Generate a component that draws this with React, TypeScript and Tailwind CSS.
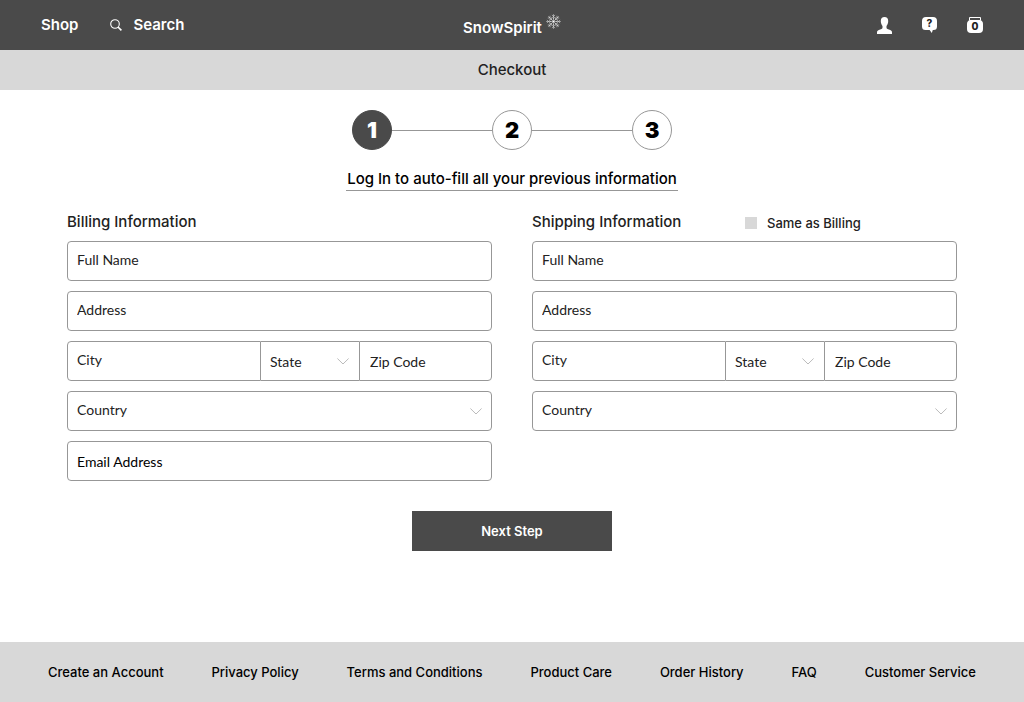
import React from "react";

const footerLinks = [
  "Create an Account",
  "Privacy Policy",
  "Terms and Conditions",
  "Product Care",
  "Order History",
  "FAQ",
  "Customer Service",
];

const textField =
  "h-10 w-full min-w-0 rounded border border-[#979797] bg-white px-[9px] font-['Lato',sans-serif] text-sm text-[#222] placeholder:text-[#222] placeholder:opacity-100 focus:outline-none focus:border-[#4a4a4a]";

function SearchIcon() {
  return (
    <svg width="12" height="12" viewBox="0 0 12 12" fill="none" stroke="#fff" aria-hidden="true">
      <circle cx="5" cy="5" r="4.3" strokeWidth="1.1" />
      <path d="M8 8l3.400 3.400" strokeWidth="1.600" />
    </svg>
  );
}

function Snowflake() {
  return (
    <svg width="15" height="15" viewBox="0 0 15 15" fill="none" stroke="#fff" strokeWidth="0.6" strokeOpacity="0.8" aria-hidden="true">
      <circle cx="7.5" cy="7.5" r="0.8" fill="#fff" stroke="none" />
      {[0, 45, 90, 135, 180, 225, 270, 315].map((angle) => (
        <g key={angle} transform={`rotate(${angle} 7.5 7.5)`}>
          <path d="M7.500 7.500V0.200M5.900 1l1.600 1.500L9.100 1M6.100 3.200l1.400 1.300 1.400-1.300" />
        </g>
      ))}
    </svg>
  );
}

function PersonIcon() {
  return (
    <svg width="15" height="17" viewBox="0 0 15 17" fill="#fff" aria-hidden="true">
      <path d="M7.500 0C9.900 0 11.200 1.600 11.200 4c0 2-.7 3.800-1.700 5v1.800c0 .6.4 1 1 1.200l2.700.9c1.200.4 1.800 1.200 1.800 2.500V17H0v-1.600c0-1.300.6-2.100 1.800-2.500l2.700-.9c.6-.2 1-.6 1-1.200V9c-1-1.200-1.700-3-1.700-5C3.800 1.600 5.100 0 7.500 0z" />
    </svg>
  );
}

function HelpIcon() {
  return (
    <svg width="15" height="16" viewBox="0 0 15 16" aria-hidden="true">
      <path d="M4 0h7a4 4 0 0 1 4 4v5.500a3.500 3.500 0 0 1-3.500 3.500h-.7L9.800 16 7.600 13H3.500A3.500 3.500 0 0 1 0 9.500V4a4 4 0 0 1 4-4z" fill="#fff" />
      <text x="7.500" y="10" textAnchor="middle" className="fill-[#222] font-['Inter',sans-serif] text-[10px] font-extrabold">?</text>
    </svg>
  );
}

function JarIcon() {
  return (
    <svg width="16" height="16" viewBox="0 0 16 16" aria-hidden="true">
      <path d="M2.500 3.500V.5h11v3" fill="none" stroke="#fff" />
      <path d="M3 3h10c2 .6 3 1.800 3 4v5a4 4 0 0 1-4 4H4a4 4 0 0 1-4-4V7c0-2.200 1-3.400 3-4z" fill="#fff" />
      <text x="8" y="13" textAnchor="middle" className="fill-[#222] font-['Inter',sans-serif] text-[10px] font-extrabold">0</text>
    </svg>
  );
}

function Step({ value, active = false }: { value: number; active?: boolean }) {
  return (
    <li
      aria-current={active ? "step" : undefined}
      className={`flex size-10 items-center justify-center rounded-full border pt-px text-[22px] font-black ${
        active ? "border-[#4a4a4a] bg-[#4a4a4a] text-white" : "border-[#979797] bg-white text-black"
      }`}
    >
      {value}
    </li>
  );
}

function SelectField({ label, className = "" }: { label: string; className?: string }) {
  return (
    <div className="relative">
      <select aria-label={label} className={`${textField} appearance-none ${className}`}>
        <option>{label}</option>
      </select>
      <svg
        width="12"
        height="7"
        viewBox="0 0 12 7"
        fill="none"
        stroke="#bbb"
        className="pointer-events-none absolute top-[17px] right-[10px]"
        aria-hidden="true"
      >
        <path d="M.4.500L6 6 11.600.500" />
      </svg>
    </div>
  );
}

function AddressFields({ group }: { group: string }) {
  return (
    <>
      <input type="text" aria-label={`${group} Full Name`} placeholder="Full Name" className={`${textField} pb-[3px]`} />
      <input type="text" aria-label={`${group} Address`} placeholder="Address" className={`${textField} pb-[3px]`} />
      <div className="grid grid-cols-[194fr_98fr_133fr]">
        <input type="text" aria-label={`${group} City`} placeholder="City" className={`${textField} rounded-r-none pb-[3px]`} />
        <SelectField label="State" className="rounded-none border-x-0 pt-px" />
        <input type="text" aria-label={`${group} Zip Code`} placeholder="Zip Code" className={`${textField} rounded-l-none pt-px pl-[10px]`} />
      </div>
      <SelectField label="Country" className="pb-[3px]" />
    </>
  );
}

export default function App() {
  return (
    <div className="flex min-h-screen flex-col bg-white font-['Inter',sans-serif] text-black">
      <header className="grid h-[50px] grid-cols-[1fr_auto_1fr] items-center bg-[#4a4a4a] px-[41px] text-white">
        <nav className="flex items-center gap-8 text-[15px] font-semibold">
          <a href="#shop">Shop</a>
          <a href="#search" className="flex items-center gap-[11px]">
            <SearchIcon />
            Search
          </a>
        </nav>
        <a href="#home" className="flex items-center justify-center gap-1 text-[15px] font-semibold">
          <span className="pt-[6px]">SnowSpirit</span>
          <span className="pb-2">
            <Snowflake />
          </span>
        </a>
        <div className="flex items-center justify-end gap-[30px]">
          <a href="#account" aria-label="Account"><PersonIcon /></a>
          <a href="#help" aria-label="Help"><HelpIcon /></a>
          <a href="#cart" aria-label="Cart"><JarIcon /></a>
        </div>
      </header>

      <div className="flex h-10 items-center justify-center bg-[#d8d8d8]">
        <h1 className="text-[15px] font-medium text-[#222]">Checkout</h1>
      </div>

      <main className="flex flex-1 flex-col items-center px-8 pt-5 pb-8">
        <ol className="flex items-center">
          <Step value={1} active />
          <li aria-hidden="true" className="h-px w-[100px] bg-[#979797]" />
          <Step value={2} />
          <li aria-hidden="true" className="h-px w-[100px] bg-[#979797]" />
          <Step value={3} />
        </ol>

        <a href="#login" className="mt-[18px] border-b border-[#979797] px-px text-[15px] leading-[22px] font-medium">
          Log In to auto-fill all your previous information
        </a>

        <form className="mt-[22px] flex w-full max-w-[890px] flex-col items-center" onSubmit={(e) => e.preventDefault()}>
          <div className="grid w-full grid-cols-2 gap-10">
            <section className="flex flex-col gap-[10px]">
              <h2 className="h-[18px] text-[15px] leading-[18px] font-medium text-[#222]">Billing Information</h2>
              <AddressFields group="Billing" />
              <input type="email" aria-label="Email Address" placeholder="Email Address" className={`${textField} pt-px placeholder:text-black`} />
            </section>
            <section className="flex flex-col gap-[10px]">
              <div className="flex h-[18px] items-center">
                <h2 className="w-[213px] text-[15px] leading-[18px] font-medium text-[#222]">Shipping Information</h2>
                <label className="flex items-center gap-[10px] pt-[2px] text-[13px] leading-4 font-medium text-[#222]">
                  <input type="checkbox" className="size-3 appearance-none bg-[#d8d8d8] checked:bg-[#4a4a4a]" />
                  Same as Billing
                </label>
              </div>
              <AddressFields group="Shipping" />
            </section>
          </div>
          <button type="submit" className="mt-[30px] h-10 w-[200px] bg-[#4a4a4a] pt-[2px] text-[13px] font-semibold text-white">
            Next Step
          </button>
        </form>
      </main>

      <footer className="flex min-h-[60px] items-center bg-[#d8d8d8] px-12 pt-[2px]">
        <nav className="flex w-full flex-wrap justify-between gap-x-4 text-[13px] font-medium">
          {footerLinks.map((link) => (
            <a key={link} href="#footer">{link}</a>
          ))}
        </nav>
      </footer>
    </div>
  );
}
